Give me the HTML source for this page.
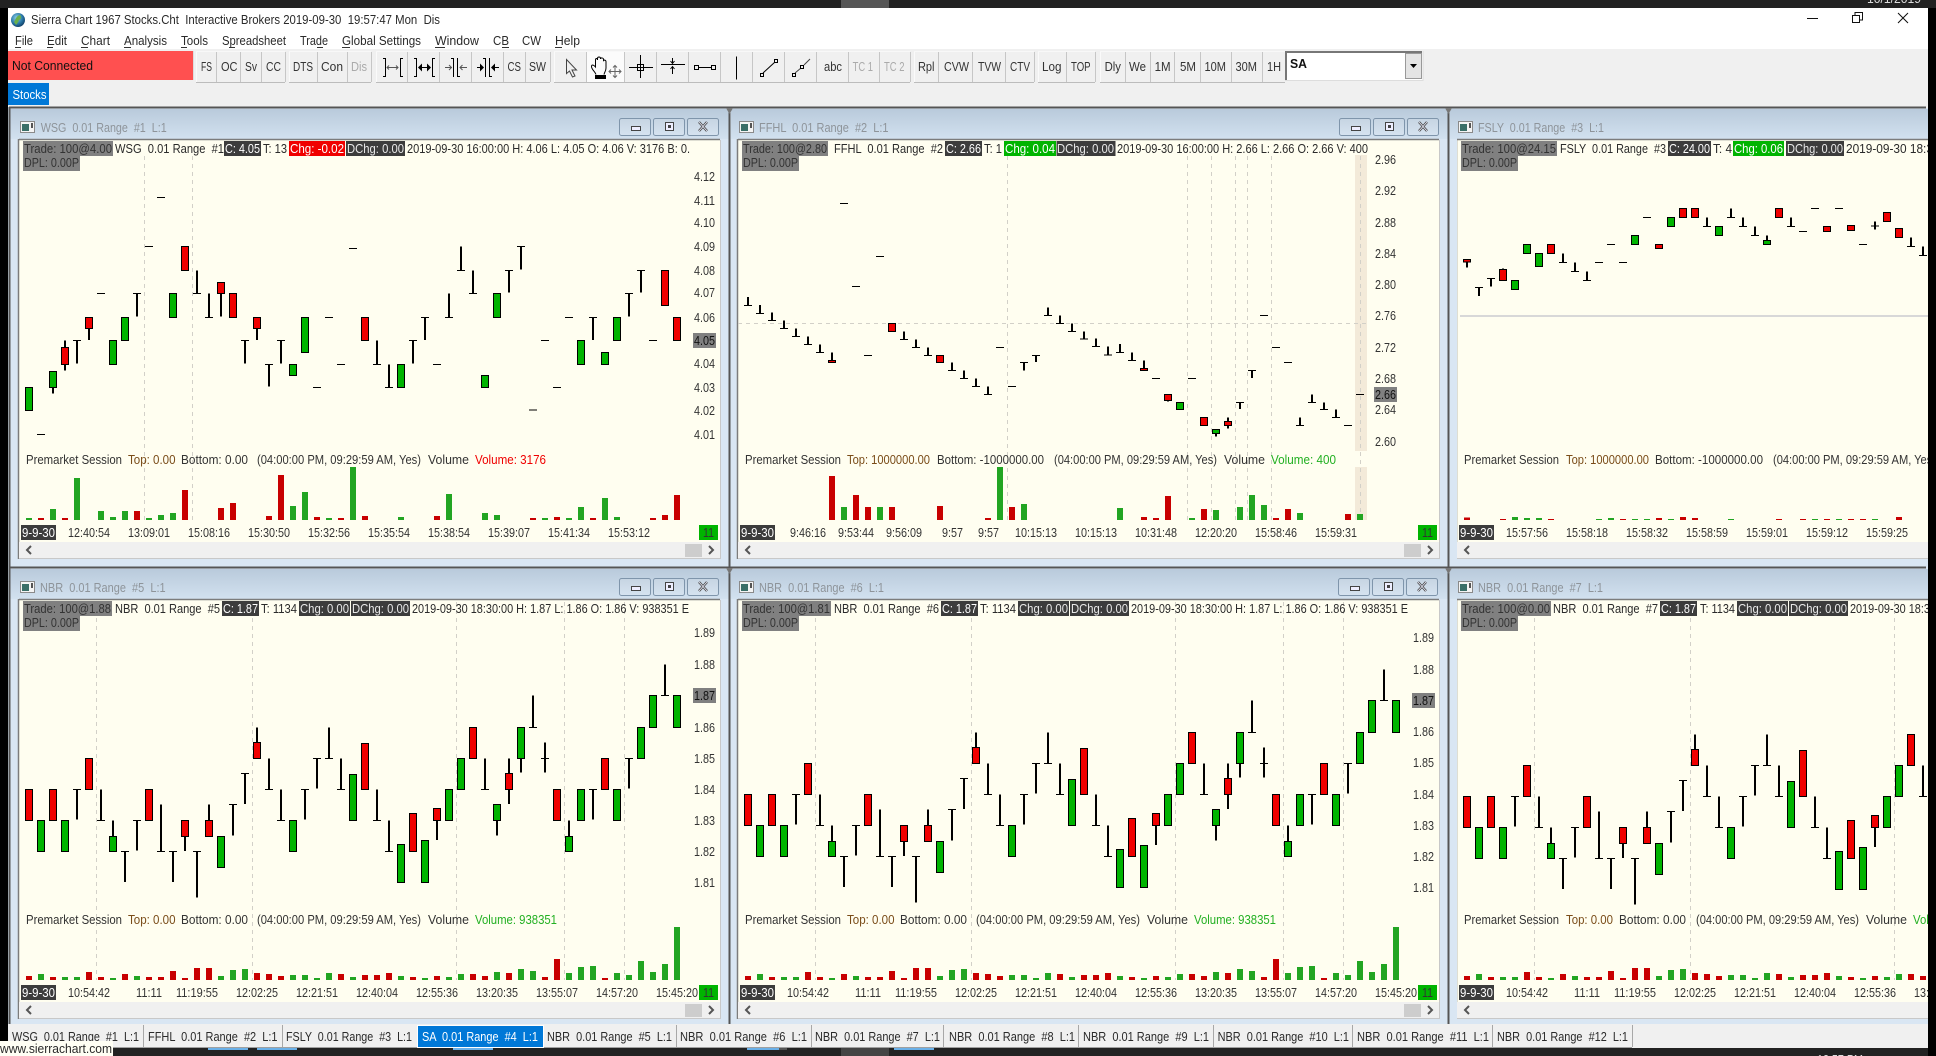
<!DOCTYPE html>
<html><head><meta charset="utf-8"><title>Sierra Chart</title>
<style>
html,body{margin:0;padding:0;background:#f0f0f0;overflow:hidden}
svg{position:absolute;left:0;top:0;display:block}
text{font-family:"Liberation Sans",sans-serif;font-size:12.5px;white-space:pre;fill:#333}
.k{fill:#111}.g{fill:#8e949a}.d{fill:#aaa}.w{fill:#fff}.l{fill:#e8e8e8}.b{fill:#7a4c18}.r{fill:#f00000}.v{fill:#22b022}.h{fill:#2a2a2a}
path{vector-effect:non-scaling-stroke}
.pw{stroke:#000;stroke-width:2;fill:none}
.pc{stroke:#000;stroke-width:1;fill:none}
.pr{fill:#f00000;stroke:#000;stroke-width:1}
.pg{fill:#00b400;stroke:#000;stroke-width:1}
.vr{stroke:#c80000;stroke-width:6;fill:none}
.vg{stroke:#22a522;stroke-width:6;fill:none}
.ds{stroke:#d2d0c8;stroke-width:1;stroke-dasharray:4 4;fill:none}
.ti{stroke:#000;stroke-width:1;fill:none}
.tf{stroke:none;fill:#000}
</style></head><body>
<svg width="1936" height="1056" viewBox="0 0 1936 1056" xmlns="http://www.w3.org/2000/svg">
<defs>
<linearGradient id="cap" x1="0" y1="0" x2="0" y2="1"><stop offset="0" stop-color="#b9cadb"/><stop offset="1" stop-color="#d2e1ef"/></linearGradient>
<linearGradient id="btn" x1="0" y1="0" x2="0" y2="1"><stop offset="0" stop-color="#c6d4e2"/><stop offset="1" stop-color="#d6e3f0"/></linearGradient>
<radialGradient id="earth" cx=".4" cy=".35" r=".7"><stop offset="0" stop-color="#8fd0e8"/><stop offset=".6" stop-color="#2a78a8"/><stop offset="1" stop-color="#103a60"/></radialGradient>
<clipPath id="c3"><rect x="1457" y="100" width="471" height="930"/></clipPath>
<g id="cbtn">
<rect x=".5" y=".5" width="31" height="17" rx="2" fill="url(#btn)" stroke="#7f95ab"/>
<rect x="34.5" y=".5" width="31" height="17" rx="2" fill="url(#btn)" stroke="#7f95ab"/>
<rect x="68.5" y=".5" width="31" height="17" rx="2" fill="url(#btn)" stroke="#7f95ab"/>
<rect x="12.5" y="8.5" width="9" height="4" fill="#eef" stroke="#444"/>
<rect x="46.5" y="4.5" width="8" height="8" fill="#eef" stroke="#444"/><rect x="49" y="7" width="3" height="3" fill="#444"/>
<path d="M80 4l8 9M88 4l-8 9" stroke="#444" stroke-width="2.4" fill="none"/><path d="M80 4l8 9M88 4l-8 9" stroke="#eef" stroke-width=".8" fill="none"/>
</g>
<g id="cic"><rect x=".5" y=".5" width="14" height="11" fill="#f4f4f4" stroke="#8a8a8a"/><rect x="2" y="3" width="7" height="7" fill="#3a6f68"/><rect x="11" y="2" width="2" height="5" fill="#555"/></g>
<g id="scr">
<rect x="19" y="542" width="701" height="16" fill="#f0f0f0"/>
<path d="M31 546l-4 4 4 4" stroke="#555" stroke-width="2" fill="none"/>
<path d="M709 546l4 4-4 4" stroke="#555" stroke-width="2" fill="none"/>
<rect x="685" y="544" width="17" height="13" fill="#cdcdcd"/>
</g>
<g id="cl"><rect x="19" y="140" width="701" height="419" fill="#fffef0"/><path d="M19 139.5H720M18.5 139V559" stroke="#7c7c7c" stroke-width="1.5" fill="none"/><path d="M19 558.5H720M720.5 140V559" stroke="#c8c8c8" fill="none"/></g>

<g id="c5">
<path class="pw" d="M48 658V749M72 658V751M84 751V799M96 845V936M108 751V842M132 703V845M144 845V936M156 799V843M168 845V983M180 703V751M204 703V797M216 610V702M228 472V518M240 565V658M252 658V751M276 658V749M288 565V656M300 472V565M312 565V658M348 658V751M360 751V845M408 751V810M456 565V658M468 751V797M480 565V702M492 565V608M504 376V472M516 517V608M540 751V799M564 658V749M600 565V656M636 283V376"/>
<path class="pc" d="M44 658h8M68 751h8M92 845h8M104 751h8M128 845h8M140 845h8M164 845h8M200 703h8M212 610h8M236 658h8M248 751h8M272 658h8M284 565h8M296 565h8M308 658h8M344 751h8M356 845h8M452 658h8M500 472h8M512 565h8M560 658h8M596 565h8M632 376h8"/>
<path class="pr" d="M-3.500 658h7v93h-7zM20.500 658h7v93h-7zM56.500 565h7v93h-7zM116.500 658h7v93h-7zM152.500 751h7v48h-7zM176.500 751h7v48h-7zM224.500 518h7v47h-7zM332.500 520h7v138h-7zM380.500 730h7v115h-7zM404.500 715h7v36h-7zM440.500 472h7v93h-7zM476.500 610h7v48h-7zM524.500 658h7v93h-7zM572.500 565h7v93h-7z"/>
<path class="pg" d="M8.500 751h7v94h-7zM32.500 751h7v94h-7zM80.500 799h7v46h-7zM188.500 799h7v93h-7zM260.500 751h7v94h-7zM320.500 613h7v138h-7zM368.500 823h7v115h-7zM392.500 811h7v127h-7zM416.500 658h7v93h-7zM428.500 565h7v93h-7zM464.500 703h7v48h-7zM488.500 472h7v93h-7zM536.500 799h7v46h-7zM548.500 658h7v93h-7zM584.500 658h7v93h-7zM608.500 472h7v93h-7zM620.500 376h7v96h-7zM644.500 376h7v96h-7z"/>
</g>
<g id="v5">
<path class="vr" d="M0 1218V1230M24 1221V1230M60 1206V1230M72 1221V1230M96 1212V1230M120 1221V1230M132 1221V1230M144 1203V1230M156 1224V1230M168 1194V1230M180 1194V1230M228 1209V1230M240 1212V1230M252 1218V1230M312 1212V1230M336 1215V1230M348 1215V1230M360 1209V1230M384 1221V1230M408 1218V1230M444 1212V1230M456 1218V1230M480 1209V1230M516 1221V1230M528 1167V1230M576 1224V1230"/>
<path class="vg" d="M12 1212V1230M36 1221V1230M48 1221V1230M84 1224V1230M108 1218V1230M192 1218V1230M204 1200V1230M216 1197V1230M264 1215V1230M276 1215V1230M288 1224V1230M300 1209V1230M324 1221V1230M372 1218V1230M396 1224V1230M420 1221V1230M432 1212V1230M468 1206V1230M492 1197V1230M504 1203V1230M540 1209V1230M552 1191V1230M564 1188V1230M588 1209V1230M600 1215V1230M612 1173V1230M624 1206V1230M636 1182V1230M648 1071V1230"/>
</g>
<path id="d5" class="ds" d="M96.500 602V980M252.500 602V980M456.500 602V980M564.500 602V980M624.500 602V980"/>
</defs>

<!-- base -->
<rect width="1936" height="1056" fill="#000"/>
<rect x="8" y="8" width="1920" height="41" fill="#fff"/>
<rect x="8" y="49" width="1920" height="59" fill="#f0f0f0"/>
<rect x="8" y="108" width="1920" height="916" fill="#d9e6f3"/>

<!-- top bar -->
<rect width="1936" height="8" fill="#222"/>
<rect x="841" width="48" height="8" fill="#565656"/>
<text x="1867" y="3" textLength="54" lengthAdjust="spacingAndGlyphs" style="fill:#ddd">10/1/2019</text>
<rect x="1928" y="8" width="8" height="1048" fill="#000"/>

<!-- title -->
<circle cx="18" cy="20" r="7" fill="url(#earth)"/><path d="M14 22c2-3 2-6 6-7 2 2 1 4-1 5-1 3-3 5-3 5z" fill="#6ab04a"/>
<text class="h" x="31" y="24" textLength="409" lengthAdjust="spacingAndGlyphs">Sierra Chart 1967 Stocks.Cht  Interactive Brokers 2019-09-30  19:57:47 Mon  Dis</text>
<path d="M1807 18.500h11" stroke="#111" fill="none"/>
<path d="M1852.500 15.500h7v7h-7zM1855 15v-2.500h7.500v7.500h-3" stroke="#111" fill="none"/>
<path d="M1898 13l10 10M1908 13l-10 10" stroke="#111" fill="none"/>

<!-- menu -->
<text class="h" x="15" y="45" textLength="18" lengthAdjust="spacingAndGlyphs">File</text>
<text class="h" x="47" y="45" textLength="20" lengthAdjust="spacingAndGlyphs">Edit</text>
<text class="h" x="81" y="45" textLength="29" lengthAdjust="spacingAndGlyphs">Chart</text>
<text class="h" x="124" y="45" textLength="43" lengthAdjust="spacingAndGlyphs">Analysis</text>
<text class="h" x="181" y="45" textLength="27" lengthAdjust="spacingAndGlyphs">Tools</text>
<text class="h" x="222" y="45" textLength="64" lengthAdjust="spacingAndGlyphs">Spreadsheet</text>
<text class="h" x="300" y="45" textLength="28" lengthAdjust="spacingAndGlyphs">Trade</text>
<text class="h" x="342" y="45" textLength="79" lengthAdjust="spacingAndGlyphs">Global Settings</text>
<text class="h" x="435" y="45" textLength="44" lengthAdjust="spacingAndGlyphs">Window</text>
<text class="h" x="493" y="45" textLength="16" lengthAdjust="spacingAndGlyphs">CB</text>
<text class="h" x="522" y="45" textLength="19" lengthAdjust="spacingAndGlyphs">CW</text>
<text class="h" x="555" y="45" textLength="25" lengthAdjust="spacingAndGlyphs">Help</text>
<path d="M15 47.500h6M47 47.500h6M81 47.500h7M124 47.500h7M181 47.500h6M229 47.500h6M317 47.500h6M342 47.500h8M435 47.500h10M502 47.500h7M555 47.500h7" stroke="#333" fill="none"/>

<!-- toolbar -->
<rect x="8" y="51" width="185" height="29" fill="#ff5050"/>
<rect x="193" y="51" width="1" height="29" fill="#ddd"/>
<text class="k" x="12" y="70" textLength="81" lengthAdjust="spacingAndGlyphs">Not Connected</text>
<rect x="586" y="51" width="38" height="32" fill="#fbfbfb"/>
<path d="M196 82.500h89M289 82.500h82M376 82.500h174M554 82.500h356M914 82.500h120M1038 82.500h57M1100 82.500h185" stroke="#bcbcbc" fill="none"/>
<path d="M196 51.500h89M289 51.500h82M376 51.500h174M554 51.500h356M914 51.500h120M1038 51.500h57M1100 51.500h185" stroke="#f8f8f8" fill="none"/>
<path d="M216.500 52v30M240.500 52v30M261.500 52v30M285.500 52v30M317.500 52v30M347.500 52v30M371.500 52v30M407.500 52v30M439.500 52v30M471.500 52v30M503.500 52v30M525.500 52v30M550.500 52v30M586.500 52v30M624.500 52v30M656.500 52v30M688.500 52v30M720.500 52v30M752.500 52v30M784.500 52v30M816.500 52v30M848.500 52v30M879.500 52v30M910.500 52v30M938.500 52v30M972.500 52v30M1005.500 52v30M1034.500 52v30M1066.500 52v30M1095.500 52v30M1125.500 52v30M1150.500 52v30M1174.500 52v30M1200.500 52v30M1231.500 52v30M1262.500 52v30" stroke="#c6c6c6" fill="none"/>
<path d="M196.500 52v30M289.500 52v30M376.500 52v30M554.500 52v30M914.500 52v30M1038.500 52v30M1100.500 52v30" stroke="#fafafa" fill="none"/>
<text x="201" y="71" textLength="11" lengthAdjust="spacingAndGlyphs">FS</text>
<text x="221" y="71" textLength="16.500" lengthAdjust="spacingAndGlyphs">OC</text>
<text x="245" y="71" textLength="12" lengthAdjust="spacingAndGlyphs">Sv</text>
<text x="266" y="71" textLength="15" lengthAdjust="spacingAndGlyphs">CC</text>
<text x="293" y="71" textLength="20" lengthAdjust="spacingAndGlyphs">DTS</text>
<text x="321" y="71" textLength="22" lengthAdjust="spacingAndGlyphs">Con</text>
<text class="d" x="351" y="71" textLength="16" lengthAdjust="spacingAndGlyphs">Dis</text>
<text x="507.500" y="71" textLength="13.500" lengthAdjust="spacingAndGlyphs">CS</text>
<text x="529" y="71" textLength="17" lengthAdjust="spacingAndGlyphs">SW</text>
<text x="824" y="71" textLength="18" lengthAdjust="spacingAndGlyphs">abc</text>
<text class="d" x="852.600" y="71" textLength="20.400" lengthAdjust="spacingAndGlyphs">TC 1</text>
<text class="d" x="884" y="71" textLength="20.500" lengthAdjust="spacingAndGlyphs">TC 2</text>
<text x="918" y="71" textLength="16.500" lengthAdjust="spacingAndGlyphs">Rpl</text>
<text x="944" y="71" textLength="25" lengthAdjust="spacingAndGlyphs">CVW</text>
<text x="978" y="71" textLength="23" lengthAdjust="spacingAndGlyphs">TVW</text>
<text x="1010" y="71" textLength="20" lengthAdjust="spacingAndGlyphs">CTV</text>
<text x="1042" y="71" textLength="19.500" lengthAdjust="spacingAndGlyphs">Log</text>
<text x="1071" y="71" textLength="19.600" lengthAdjust="spacingAndGlyphs">TOP</text>
<text x="1104.600" y="71" textLength="16.400" lengthAdjust="spacingAndGlyphs">Dly</text>
<text x="1129" y="71" textLength="17" lengthAdjust="spacingAndGlyphs">We</text>
<text x="1154.600" y="71" textLength="16" lengthAdjust="spacingAndGlyphs">1M</text>
<text x="1180" y="71" textLength="16" lengthAdjust="spacingAndGlyphs">5M</text>
<text x="1204.500" y="71" textLength="21.500" lengthAdjust="spacingAndGlyphs">10M</text>
<text x="1235.500" y="71" textLength="21.500" lengthAdjust="spacingAndGlyphs">30M</text>
<text x="1267" y="71" textLength="14" lengthAdjust="spacingAndGlyphs">1H</text>
<!-- toolbar icons -->
<path class="ti" d="M385.500 58v19M400.500 58v19M383 58.500h2M383 76.500h2M401 58.500h2M401 76.500h2"/>
<path class="ti" style="stroke:#555" d="M387 67.500h11M389 65.500l-2 2 2 2M396 65.500l2 2-2 2"/>
<path class="ti" d="M416.500 58v19M432.500 58v19M414 58.500h2M414 76.500h2M433 58.500h2M433 76.500h2M420 67.500h9"/>
<path class="tf" d="M418 67.500l4-4v8zM431 67.500l-4-4v8z"/>
<path class="ti" d="M453.500 58v19M457.500 58v19M451 58.500h2M458 76.500h2"/>
<path class="ti" style="stroke:#555" d="M445 67.500h7M449 65l2.500 2.500-2.500 2.500M460 67.500h7M462.500 65L460 67.500l2.500 2.500"/>
<path class="ti" d="M485.500 58v19M489.500 58v19M483 58.500h2M490 76.500h2M477 67.500h4M494 67.500h5"/>
<path class="tf" d="M484 67.500l-4-4v8zM491 67.500l4-4v8z"/>
<path class="ti" style="stroke:#444" d="M566.500 59.500V73.500l3-2.500 3 6 2.500-1-3-6h4.500z"/>
<path class="ti" d="M596 74.500c-1-3-4.500-5-4.500-8 0-2 2-2 4 .5V60c0-2 2-2 2 0V58.500c0-2 3-2 3 0v.5c0-1.500 3-1.500 3 .5v1c1-1 2.500 0 2.500 1v6.500c0 3-1.500 4-2 6.500"/>
<rect x="595" y="75" width="11" height="4" fill="#000"/>
<path class="ti" style="stroke:#666" d="M615 65.500v12M609 71.500h12M613 67.500l2-2 2 2M613 75.500l2 2 2-2M611 69.500l-2 2 2 2M619 69.500l2 2-2 2"/>
<path class="ti" d="M640.500 55v23M629 67.500h24"/><rect x="637.500" y="64.500" width="6" height="6" fill="none" stroke="#000"/>
<path class="ti" d="M661 64.500h24M672.500 58v5.500M670.500 61l2 2.500 2-2.500M672.500 74v-7.500M670.500 69l2-2.500 2 2.500"/>
<path class="ti" d="M698 67.500h14"/><rect x="694.500" y="65.500" width="4" height="4" fill="none" stroke="#000"/><rect x="711.500" y="65.500" width="4" height="4" fill="none" stroke="#000"/>
<path class="ti" d="M736.500 56.500v23"/>
<path class="ti" d="M763 73l12-11"/><rect x="760.500" y="73.500" width="3" height="3" fill="none" stroke="#000"/><rect x="774.500" y="59.500" width="3" height="3" fill="none" stroke="#000"/>
<path class="ti" style="stroke:#444" d="M795 73l6-5M804 65l6-6"/><rect x="792.500" y="73.500" width="3" height="3" fill="none" stroke="#000"/><rect x="800.500" y="65.500" width="3" height="3" fill="none" stroke="#000"/>
<!-- combo -->
<rect x="1285" y="51" width="138" height="30" fill="#fff"/>
<path d="M1286 80V52H1422" stroke="#777" stroke-width="2" fill="none"/>
<path d="M1285 80.500H1423M1423 51V81" stroke="#ddd" fill="none"/>
<rect x="1405.500" y="53.500" width="16" height="25" fill="#e4e4e4" stroke="#999"/>
<path d="M1410 64h7l-3.500 4z" fill="#000"/>
<text class="k" x="1290" y="68" textLength="17" lengthAdjust="spacingAndGlyphs" style="font-weight:bold">SA</text>
<!-- stocks -->
<rect x="8" y="83" width="41" height="22" fill="#0078d7"/>
<text class="w" x="12.500" y="99" textLength="34" lengthAdjust="spacingAndGlyphs">Stocks</text>

<!-- MDI frame -->
<rect x="10" y="109" width="719" height="30" fill="url(#cap)"/><rect x="731" y="109" width="717" height="30" fill="url(#cap)"/><rect x="1450" y="109" width="478" height="30" fill="url(#cap)"/>
<rect x="10" y="569" width="719" height="30" fill="url(#cap)"/><rect x="731" y="569" width="717" height="30" fill="url(#cap)"/><rect x="1450" y="569" width="478" height="30" fill="url(#cap)"/>
<path d="M9 107.500H1926M9 567.500H1926" stroke="#555" stroke-width="2" fill="none"/>
<path d="M9.500 107V1024M729.500 107V1024M1448.500 107V1024" stroke="#555" stroke-width="2" fill="none"/>
<path d="M726 108h7l-3.500 6zM1445 108h7l-3.500 6zM726 568h7l-3.500 6zM1445 568h7l-3.500 6z" fill="#777"/>
<use href="#cl"/><use href="#cl" x="719"/>
<use href="#cl" y="460"/><use href="#cl" x="719" y="460"/>
<g clip-path="url(#c3)"><use href="#cl" x="1438"/><use href="#cl" x="1438" y="460"/></g>
<use href="#cbtn" x="619" y="118"/><use href="#cbtn" x="1339" y="118"/><use href="#cbtn" x="619" y="578"/><use href="#cbtn" x="1338" y="578"/>
<use href="#cic" x="20" y="121"/><use href="#cic" x="739" y="121"/><use href="#cic" x="1458" y="121"/>
<use href="#cic" x="20" y="581"/><use href="#cic" x="739" y="581"/><use href="#cic" x="1458" y="581"/>
<text class="g" x="40.700" y="132" textLength="126" lengthAdjust="spacingAndGlyphs">WSG  0.01 Range  #1  L:1</text>
<text class="g" x="759" y="132" textLength="129.500" lengthAdjust="spacingAndGlyphs">FFHL  0.01 Range  #2  L:1</text>
<text class="g" x="1478" y="132" textLength="126" lengthAdjust="spacingAndGlyphs">FSLY  0.01 Range  #3  L:1</text>
<text class="g" x="40" y="592" textLength="125.600" lengthAdjust="spacingAndGlyphs">NBR  0.01 Range  #5  L:1</text>
<text class="g" x="759" y="592" textLength="125" lengthAdjust="spacingAndGlyphs">NBR  0.01 Range  #6  L:1</text>
<text class="g" x="1478" y="592" textLength="125" lengthAdjust="spacingAndGlyphs">NBR  0.01 Range  #7  L:1</text>

<!-- CHART 1 -->
<path class="ds" d="M144.500 156V520M192.500 156V520"/>
<g transform="translate(29 160) scale(1 .33333)" shape-rendering="crispEdges">
<path class="pw" d="M24 683V700M36 541V632M48 541V611M60 506V540M108 400V470M168 331V400M180 400V472M192 400V470M216 541V611M228 506V540M240 613V680M252 541V611M348 541V613M360 613V682M384 541V611M396 472V540M420 400V472M432 259V331M444 331V400M480 331V398M492 259V329M564 472V540M600 400V470M612 331V398"/>
<path class="pc" d="M8 823h8M44 541h8M68 400h8M104 400h8M116 259h8M128 112h8M164 400h8M176 472h8M212 541h8M236 613h8M248 541h8M284 682h8M296 472h8M308 613h8M320 265h8M344 613h8M356 682h8M380 541h8M392 472h8M404 613h8M416 472h8M428 331h8M440 400h8M476 331h8M488 259h8M500 750h8M512 541h8M524 682h8M536 472h8M560 472h8M596 400h8M608 331h8M620 541h8"/>
<path class="pr" d="M32.500 562h7v51h-7zM56.500 472h7v34h-7zM152.500 259h7v72h-7zM188.500 367h7v33h-7zM200.500 400h7v72h-7zM224.500 472h7v34h-7zM332.500 472h7v69h-7zM632.500 331h7v105h-7zM644.500 472h7v69h-7z"/>
<path class="pg" d="M-3.500 683h7v68h-7zM20.500 635h7v48h-7zM80.500 541h7v72h-7zM92.500 472h7v69h-7zM140.500 400h7v72h-7zM260.500 613h7v34h-7zM272.500 472h7v105h-7zM368.500 613h7v69h-7zM452.500 647h7v35h-7zM464.500 400h7v72h-7zM548.500 541h7v72h-7zM572.500 577h7v36h-7zM584.500 472h7v69h-7z"/>
<path class="vr" d="M12 1074V1080M36 1074V1080M108 1053V1080M156 990V1080M192 1044V1080M204 1029V1080M240 1068V1080M252 945V1080M288 1071V1080M312 1074V1080M336 1068V1080M408 1068V1080M504 1074V1080M528 1071V1080M564 1074V1080M624 1074V1080M636 1065V1080M648 1005V1080"/>
<path class="vg" d="M0 1074V1080M24 1047V1080M48 954V1080M72 1053V1080M84 1071V1080M96 1053V1080M120 1074V1080M132 1065V1080M144 1059V1080M264 1038V1080M276 996V1080M300 1074V1080M324 921V1080M372 1071V1080M420 1002V1080M456 1059V1080M468 1065V1080M516 1074V1080M540 1074V1080M552 1041V1080M576 1014V1080M588 1071V1080"/>
</g>
<rect x="23" y="141" width="90" height="15" fill="#808080"/><rect x="224" y="141" width="37" height="15" fill="#3c3c3c"/><rect x="289" y="141" width="56" height="15" fill="#f00000"/><rect x="346" y="141" width="59" height="15" fill="#3c3c3c"/><rect x="23" y="156" width="57" height="15" fill="#808080"/>
<text x="24" y="153" textLength="88" lengthAdjust="spacingAndGlyphs">Trade: 100@4.00</text>
<text class="h" x="115" y="153" textLength="109" lengthAdjust="spacingAndGlyphs">WSG  0.01 Range  #1</text>
<text class="w" x="225" y="153" textLength="35" lengthAdjust="spacingAndGlyphs">C: 4.05</text>
<text class="h" x="263" y="153" textLength="24" lengthAdjust="spacingAndGlyphs">T: 13</text>
<text class="w" x="290" y="153" textLength="54" lengthAdjust="spacingAndGlyphs">Chg: -0.02</text>
<text class="l" x="347" y="153" textLength="57" lengthAdjust="spacingAndGlyphs">DChg: 0.00</text>
<text class="h" x="407" y="153" textLength="283" lengthAdjust="spacingAndGlyphs">2019-09-30 16:00:00 H: 4.06 L: 4.05 O: 4.06 V: 3176 B: 0.</text>
<text x="24" y="167" textLength="55" lengthAdjust="spacingAndGlyphs">DPL: 0.00P</text>
<rect x="693" y="333" width="23" height="15" fill="#808080"/>
<text x="694" y="181" textLength="21" lengthAdjust="spacingAndGlyphs">4.12</text><text x="694" y="205" textLength="21" lengthAdjust="spacingAndGlyphs">4.11</text><text x="694" y="227" textLength="21" lengthAdjust="spacingAndGlyphs">4.10</text><text x="694" y="251" textLength="21" lengthAdjust="spacingAndGlyphs">4.09</text><text x="694" y="275" textLength="21" lengthAdjust="spacingAndGlyphs">4.08</text><text x="694" y="297" textLength="21" lengthAdjust="spacingAndGlyphs">4.07</text><text x="694" y="322" textLength="21" lengthAdjust="spacingAndGlyphs">4.06</text><text class="k" x="694" y="345" textLength="21" lengthAdjust="spacingAndGlyphs">4.05</text><text x="694" y="368" textLength="21" lengthAdjust="spacingAndGlyphs">4.04</text><text x="694" y="392" textLength="21" lengthAdjust="spacingAndGlyphs">4.03</text><text x="694" y="415" textLength="21" lengthAdjust="spacingAndGlyphs">4.02</text><text x="694" y="439" textLength="21" lengthAdjust="spacingAndGlyphs">4.01</text>
<text x="26" y="464" textLength="96" lengthAdjust="spacingAndGlyphs">Premarket Session</text><text class="b" x="128" y="464" textLength="47.500" lengthAdjust="spacingAndGlyphs">Top: 0.00</text><text x="181" y="464" textLength="67" lengthAdjust="spacingAndGlyphs">Bottom: 0.00</text><text x="257" y="464" textLength="164" lengthAdjust="spacingAndGlyphs">(04:00:00 PM, 09:29:59 AM, Yes)</text><text x="428" y="464" textLength="41" lengthAdjust="spacingAndGlyphs">Volume</text><text class="r" x="475" y="464" textLength="71" lengthAdjust="spacingAndGlyphs">Volume: 3176</text>
<rect x="21" y="525" width="35" height="15" fill="#3c3c3c"/><text class="w" x="22" y="537" textLength="33" lengthAdjust="spacingAndGlyphs">9-9-30</text>
<rect x="699" y="525" width="19" height="15" fill="#00b400"/><text x="703" y="537" textLength="11" lengthAdjust="spacingAndGlyphs">11</text>
<text x="68" y="537" textLength="42" lengthAdjust="spacingAndGlyphs">12:40:54</text><text x="128" y="537" textLength="42" lengthAdjust="spacingAndGlyphs">13:09:01</text><text x="188" y="537" textLength="42" lengthAdjust="spacingAndGlyphs">15:08:16</text><text x="248" y="537" textLength="42" lengthAdjust="spacingAndGlyphs">15:30:50</text><text x="308" y="537" textLength="42" lengthAdjust="spacingAndGlyphs">15:32:56</text><text x="368" y="537" textLength="42" lengthAdjust="spacingAndGlyphs">15:35:54</text><text x="428" y="537" textLength="42" lengthAdjust="spacingAndGlyphs">15:38:54</text><text x="488" y="537" textLength="42" lengthAdjust="spacingAndGlyphs">15:39:07</text><text x="548" y="537" textLength="42" lengthAdjust="spacingAndGlyphs">15:41:34</text><text x="608" y="537" textLength="42" lengthAdjust="spacingAndGlyphs">15:53:12</text>
<use href="#scr"/>

<!-- CHART 2 -->
<rect x="1355" y="155" width="12" height="296" fill="#f3ead9"/><rect x="1355" y="467" width="12" height="53" fill="#f3ead9"/>
<path class="ds" d="M1007.500 156V520M1187.500 156V520M1211.500 156V520M1235.500 156V520M1247.500 156V520M1271.500 156V520M1360.500 156V520M738 323.500H1367"/>
<g transform="translate(748 160) scale(1 .33333)" shape-rendering="crispEdges">
<path class="pw" d="M0 411V437M12 435V461M24 458V482M36 481V505M48 505V529M60 529V553M72 553V577M84 577V603M156 515V539M168 539V563M180 563V587M204 608V632M216 632V656M228 656V680M240 680V704M276 607V631M288 587V606M300 442V466M312 466V490M324 491V515M336 515V537M348 535V560M360 560V585M372 552V578M384 578V602M396 602V626M420 721V725M468 821V830M480 772V806M492 728V747M504 632V654M552 772V796M564 703V727M576 727V749M588 749V773"/>
<path class="pc" d="M-4 437h8M8 461h8M20 482h8M32 505h8M44 529h8M56 553h8M68 577h8M92 130h8M104 379h8M116 586h8M128 289h8M152 539h8M164 563h8M176 587h8M200 632h8M212 656h8M224 680h8M236 704h8M248 563h8M260 679h8M272 607h8M284 587h8M296 466h8M308 490h8M320 515h8M332 537h8M344 560h8M356 585h8M368 578h8M380 602h8M404 655h8M440 655h8M488 728h8M500 632h8M512 466h8M524 563h8M536 607h8M548 796h8M560 727h8M572 749h8M584 773h8M596 796h8M608 703h8"/>
<path class="pr" d="M80.500 601h7v7h-7zM140.500 490h7v25h-7zM188.500 587h7v21h-7zM392.500 625h7v6h-7zM416.500 704h7v17h-7zM452.500 773h7v23h-7zM476.500 785h7v11h-7z"/>
<path class="pg" d="M428.500 728h7v20h-7zM464.500 809h7v12h-7z"/>
<path class="vr" d="M84 948V1080M108 1005V1080M120 1041V1080M144 1041V1080M192 1038V1080M240 1074V1080M264 1041V1080M396 1071V1080M408 1074V1080M420 1008V1080M456 1047V1080M528 1074V1080M540 1047V1080M600 1062V1080"/>
<path class="vg" d="M96 1041V1080M132 1041V1080M252 921V1080M276 1032V1080M372 1044V1080M444 1074V1080M468 1050V1080M492 1041V1080M504 1005V1080M516 1035V1080M552 1059V1080M612 1062V1080"/>
</g>
<rect x="742" y="141" width="86" height="15" fill="#808080"/><rect x="945" y="141" width="37" height="15" fill="#3c3c3c"/><rect x="1004" y="141" width="52" height="15" fill="#00b400"/><rect x="1056.500" y="141" width="59" height="15" fill="#3c3c3c"/><rect x="742" y="156" width="57" height="15" fill="#808080"/>
<text x="743" y="153" textLength="84" lengthAdjust="spacingAndGlyphs">Trade: 100@2.80</text>
<text class="h" x="834" y="153" textLength="109" lengthAdjust="spacingAndGlyphs">FFHL  0.01 Range  #2</text>
<text class="w" x="946" y="153" textLength="35" lengthAdjust="spacingAndGlyphs">C: 2.66</text>
<text class="h" x="984" y="153" textLength="18" lengthAdjust="spacingAndGlyphs">T: 1</text>
<text class="w" x="1005" y="153" textLength="50" lengthAdjust="spacingAndGlyphs">Chg: 0.04</text>
<text class="l" x="1057" y="153" textLength="57" lengthAdjust="spacingAndGlyphs">DChg: 0.00</text>
<text class="h" x="1117" y="153" textLength="251" lengthAdjust="spacingAndGlyphs">2019-09-30 16:00:00 H: 2.66 L: 2.66 O: 2.66 V: 400</text>
<text x="743" y="167" textLength="55" lengthAdjust="spacingAndGlyphs">DPL: 0.00P</text>
<rect x="1374" y="387" width="23" height="15" fill="#808080"/>
<text x="1375" y="164" textLength="21" lengthAdjust="spacingAndGlyphs">2.96</text><text x="1375" y="195" textLength="21" lengthAdjust="spacingAndGlyphs">2.92</text><text x="1375" y="227" textLength="21" lengthAdjust="spacingAndGlyphs">2.88</text><text x="1375" y="258" textLength="21" lengthAdjust="spacingAndGlyphs">2.84</text><text x="1375" y="289" textLength="21" lengthAdjust="spacingAndGlyphs">2.80</text><text x="1375" y="320" textLength="21" lengthAdjust="spacingAndGlyphs">2.76</text><text x="1375" y="352" textLength="21" lengthAdjust="spacingAndGlyphs">2.72</text><text x="1375" y="383" textLength="21" lengthAdjust="spacingAndGlyphs">2.68</text><text class="k" x="1375" y="399" textLength="21" lengthAdjust="spacingAndGlyphs">2.66</text><text x="1375" y="414" textLength="21" lengthAdjust="spacingAndGlyphs">2.64</text><text x="1375" y="446" textLength="21" lengthAdjust="spacingAndGlyphs">2.60</text>
<text x="745" y="464" textLength="96" lengthAdjust="spacingAndGlyphs">Premarket Session</text><text class="b" x="847" y="464" textLength="83" lengthAdjust="spacingAndGlyphs">Top: 1000000.00</text><text x="937" y="464" textLength="107" lengthAdjust="spacingAndGlyphs">Bottom: -1000000.00</text><text x="1054" y="464" textLength="163" lengthAdjust="spacingAndGlyphs">(04:00:00 PM, 09:29:59 AM, Yes)</text><text x="1224" y="464" textLength="41" lengthAdjust="spacingAndGlyphs">Volume</text><text class="v" x="1271" y="464" textLength="65" lengthAdjust="spacingAndGlyphs">Volume: 400</text>
<rect x="740" y="525" width="35" height="15" fill="#3c3c3c"/><text class="w" x="741" y="537" textLength="33" lengthAdjust="spacingAndGlyphs">9-9-30</text>
<rect x="1418" y="525" width="19" height="15" fill="#00b400"/><text x="1422" y="537" textLength="11" lengthAdjust="spacingAndGlyphs">11</text>
<text x="790" y="537" textLength="36" lengthAdjust="spacingAndGlyphs">9:46:16</text><text x="838" y="537" textLength="36" lengthAdjust="spacingAndGlyphs">9:53:44</text><text x="886" y="537" textLength="36" lengthAdjust="spacingAndGlyphs">9:56:09</text><text x="942" y="537" textLength="21" lengthAdjust="spacingAndGlyphs">9:57</text><text x="978" y="537" textLength="21" lengthAdjust="spacingAndGlyphs">9:57</text><text x="1015" y="537" textLength="42" lengthAdjust="spacingAndGlyphs">10:15:13</text><text x="1075" y="537" textLength="42" lengthAdjust="spacingAndGlyphs">10:15:13</text><text x="1135" y="537" textLength="42" lengthAdjust="spacingAndGlyphs">10:31:48</text><text x="1195" y="537" textLength="42" lengthAdjust="spacingAndGlyphs">12:20:20</text><text x="1255" y="537" textLength="42" lengthAdjust="spacingAndGlyphs">15:58:46</text><text x="1315" y="537" textLength="42" lengthAdjust="spacingAndGlyphs">15:59:31</text>
<use href="#scr" x="719"/>

<!-- CHART 3 -->
<g clip-path="url(#c3)">
<rect x="1460" y="315" width="468" height="2" fill="#d8d8d8"/>
<g transform="translate(1467 160) scale(1 .33333)" shape-rendering="crispEdges">
<path class="pw" d="M0 306V323M12 382V408M24 355V380M36 325V330M96 280V307M108 307V334M120 334V361M240 172V199M264 145V172M276 172V199M288 199V226M300 226V242M324 172V199M408 184V208M444 232V259M456 259V286"/>
<path class="pc" d="M8 382h8M20 355h8M92 307h8M104 334h8M116 361h8M128 307h8M140 253h8M152 307h8M176 172h8M236 199h8M260 172h8M272 199h8M284 226h8M320 199h8M332 214h8M344 145h8M368 145h8M392 253h8M404 198h8M440 259h8M452 286h8"/>
<path class="pr" d="M-3.500 299h7v7h-7zM32.500 328h7v33h-7zM80.500 254h7v26h-7zM188.500 254h7v11h-7zM212.500 146h7v26h-7zM224.500 146h7v26h-7zM308.500 146h7v26h-7zM356.500 200h7v14h-7zM380.500 197h7v14h-7zM416.500 158h7v26h-7zM428.500 206h7v26h-7z"/>
<path class="pg" d="M44.500 362h7v26h-7zM56.500 254h7v26h-7zM68.500 281h7v38h-7zM164.500 227h7v26h-7zM200.500 173h7v26h-7zM248.500 200h7v26h-7zM296.500 242h7v11h-7z"/>
<path class="vr" d="M0 1072V1080M36 1077V1080M84 1077V1080M156 1077V1080M192 1074V1080M216 1071V1080M228 1074V1080M312 1077V1080M336 1077V1080M360 1077V1080M384 1077V1080M396 1077V1080M432 1071V1080"/>
<path class="vg" d="M48 1071V1080M60 1074V1080M72 1074V1080M132 1077V1080M144 1074V1080M168 1077V1080M180 1077V1080M204 1077V1080M264 1077V1080M348 1077V1080M372 1077V1080M408 1077V1080"/>
</g>
<rect x="1461" y="141" width="96" height="15" fill="#808080"/><rect x="1668" y="141" width="43" height="15" fill="#3c3c3c"/><rect x="1733" y="141" width="51" height="15" fill="#00b400"/><rect x="1786" y="141" width="58" height="15" fill="#3c3c3c"/><rect x="1461" y="156" width="57" height="15" fill="#808080"/>
<text x="1462" y="153" textLength="94" lengthAdjust="spacingAndGlyphs">Trade: 100@24.15</text>
<text class="h" x="1560" y="153" textLength="106" lengthAdjust="spacingAndGlyphs">FSLY  0.01 Range  #3</text>
<text class="w" x="1669" y="153" textLength="41" lengthAdjust="spacingAndGlyphs">C: 24.00</text>
<text class="h" x="1713" y="153" textLength="19" lengthAdjust="spacingAndGlyphs">T: 4</text>
<text class="w" x="1734" y="153" textLength="49" lengthAdjust="spacingAndGlyphs">Chg: 0.06</text>
<text class="l" x="1787" y="153" textLength="56" lengthAdjust="spacingAndGlyphs">DChg: 0.00</text>
<text class="h" x="1846" y="153" textLength="290" lengthAdjust="spacingAndGlyphs">2019-09-30 18:30:00 H: 24.00 L: 24.00 O: 24.00 V: 100</text>
<text x="1462" y="167" textLength="55" lengthAdjust="spacingAndGlyphs">DPL: 0.00P</text>
<text x="1464" y="464" textLength="95" lengthAdjust="spacingAndGlyphs">Premarket Session</text><text class="b" x="1566" y="464" textLength="83" lengthAdjust="spacingAndGlyphs">Top: 1000000.00</text><text x="1655" y="464" textLength="108" lengthAdjust="spacingAndGlyphs">Bottom: -1000000.00</text><text x="1773" y="464" textLength="163" lengthAdjust="spacingAndGlyphs">(04:00:00 PM, 09:29:59 AM, Yes)</text>
<rect x="1459" y="525" width="35" height="15" fill="#3c3c3c"/><text class="w" x="1460" y="537" textLength="33" lengthAdjust="spacingAndGlyphs">9-9-30</text>
<text x="1506" y="537" textLength="42" lengthAdjust="spacingAndGlyphs">15:57:56</text><text x="1566" y="537" textLength="42" lengthAdjust="spacingAndGlyphs">15:58:18</text><text x="1626" y="537" textLength="42" lengthAdjust="spacingAndGlyphs">15:58:32</text><text x="1686" y="537" textLength="42" lengthAdjust="spacingAndGlyphs">15:58:59</text><text x="1746" y="537" textLength="42" lengthAdjust="spacingAndGlyphs">15:59:01</text><text x="1806" y="537" textLength="42" lengthAdjust="spacingAndGlyphs">15:59:12</text><text x="1866" y="537" textLength="42" lengthAdjust="spacingAndGlyphs">15:59:25</text>
<rect x="1457" y="542" width="471" height="16" fill="#f0f0f0"/><path d="M1469 546l-4 4 4 4" stroke="#555" stroke-width="2" fill="none"/>
</g>

<!-- CHART 5 -->
<use href="#d5"/>
<g transform="translate(29 570) scale(1 .33333)" shape-rendering="crispEdges"><use href="#c5"/><use href="#v5"/></g>
<rect x="23" y="601" width="89" height="15" fill="#808080"/><rect x="222" y="601" width="37" height="15" fill="#3c3c3c"/><rect x="299" y="601" width="51" height="15" fill="#3c3c3c"/><rect x="351" y="601" width="59" height="15" fill="#3c3c3c"/><rect x="23" y="616" width="57" height="15" fill="#808080"/>
<text x="24" y="613" textLength="87" lengthAdjust="spacingAndGlyphs">Trade: 100@1.88</text>
<text class="h" x="115" y="613" textLength="105" lengthAdjust="spacingAndGlyphs">NBR  0.01 Range  #5</text>
<text class="w" x="223" y="613" textLength="35" lengthAdjust="spacingAndGlyphs">C: 1.87</text>
<text class="h" x="261" y="613" textLength="36" lengthAdjust="spacingAndGlyphs">T: 1134</text>
<text class="l" x="300" y="613" textLength="49" lengthAdjust="spacingAndGlyphs">Chg: 0.00</text>
<text class="l" x="352" y="613" textLength="57" lengthAdjust="spacingAndGlyphs">DChg: 0.00</text>
<text class="h" x="412" y="613" textLength="277" lengthAdjust="spacingAndGlyphs">2019-09-30 18:30:00 H: 1.87 L: 1.86 O: 1.86 V: 938351 E</text>
<text x="24" y="627" textLength="55" lengthAdjust="spacingAndGlyphs">DPL: 0.00P</text>
<rect x="693" y="688" width="23" height="15" fill="#808080"/>
<text x="694" y="637" textLength="21" lengthAdjust="spacingAndGlyphs">1.89</text><text x="694" y="669" textLength="21" lengthAdjust="spacingAndGlyphs">1.88</text><text class="k" x="694" y="700" textLength="21" lengthAdjust="spacingAndGlyphs">1.87</text><text x="694" y="732" textLength="21" lengthAdjust="spacingAndGlyphs">1.86</text><text x="694" y="763" textLength="21" lengthAdjust="spacingAndGlyphs">1.85</text><text x="694" y="794" textLength="21" lengthAdjust="spacingAndGlyphs">1.84</text><text x="694" y="825" textLength="21" lengthAdjust="spacingAndGlyphs">1.83</text><text x="694" y="856" textLength="21" lengthAdjust="spacingAndGlyphs">1.82</text><text x="694" y="887" textLength="21" lengthAdjust="spacingAndGlyphs">1.81</text>
<text x="26" y="924" textLength="96" lengthAdjust="spacingAndGlyphs">Premarket Session</text><text class="b" x="128" y="924" textLength="47.500" lengthAdjust="spacingAndGlyphs">Top: 0.00</text><text x="181" y="924" textLength="67" lengthAdjust="spacingAndGlyphs">Bottom: 0.00</text><text x="257" y="924" textLength="164" lengthAdjust="spacingAndGlyphs">(04:00:00 PM, 09:29:59 AM, Yes)</text><text x="428" y="924" textLength="41" lengthAdjust="spacingAndGlyphs">Volume</text><text class="v" x="475" y="924" textLength="82" lengthAdjust="spacingAndGlyphs">Volume: 938351</text>
<rect x="21" y="985" width="35" height="15" fill="#3c3c3c"/><text class="w" x="22" y="997" textLength="33" lengthAdjust="spacingAndGlyphs">9-9-30</text>
<rect x="699" y="985" width="19" height="15" fill="#00b400"/><text x="703" y="997" textLength="11" lengthAdjust="spacingAndGlyphs">11</text>
<text x="68" y="997" textLength="42" lengthAdjust="spacingAndGlyphs">10:54:42</text><text x="136" y="997" textLength="26" lengthAdjust="spacingAndGlyphs">11:11</text><text x="176" y="997" textLength="42" lengthAdjust="spacingAndGlyphs">11:19:55</text><text x="236" y="997" textLength="42" lengthAdjust="spacingAndGlyphs">12:02:25</text><text x="296" y="997" textLength="42" lengthAdjust="spacingAndGlyphs">12:21:51</text><text x="356" y="997" textLength="42" lengthAdjust="spacingAndGlyphs">12:40:04</text><text x="416" y="997" textLength="42" lengthAdjust="spacingAndGlyphs">12:55:36</text><text x="476" y="997" textLength="42" lengthAdjust="spacingAndGlyphs">13:20:35</text><text x="536" y="997" textLength="42" lengthAdjust="spacingAndGlyphs">13:55:07</text><text x="596" y="997" textLength="42" lengthAdjust="spacingAndGlyphs">14:57:20</text><text x="656" y="997" textLength="42" lengthAdjust="spacingAndGlyphs">15:45:20</text>
<use href="#scr" y="460"/>

<!-- CHART 6 -->
<use href="#d5" x="719"/>
<g transform="translate(748 575) scale(1 .33333)" shape-rendering="crispEdges"><use href="#c5"/></g>
<g transform="translate(748 570) scale(1 .33333)" shape-rendering="crispEdges"><use href="#v5"/></g>
<rect x="742" y="601" width="89" height="15" fill="#808080"/><rect x="941" y="601" width="37" height="15" fill="#3c3c3c"/><rect x="1018" y="601" width="51" height="15" fill="#3c3c3c"/><rect x="1070" y="601" width="59" height="15" fill="#3c3c3c"/><rect x="742" y="616" width="57" height="15" fill="#808080"/>
<text x="743" y="613" textLength="87" lengthAdjust="spacingAndGlyphs">Trade: 100@1.81</text>
<text class="h" x="834" y="613" textLength="105" lengthAdjust="spacingAndGlyphs">NBR  0.01 Range  #6</text>
<text class="w" x="942" y="613" textLength="35" lengthAdjust="spacingAndGlyphs">C: 1.87</text>
<text class="h" x="980" y="613" textLength="36" lengthAdjust="spacingAndGlyphs">T: 1134</text>
<text class="l" x="1019" y="613" textLength="49" lengthAdjust="spacingAndGlyphs">Chg: 0.00</text>
<text class="l" x="1071" y="613" textLength="57" lengthAdjust="spacingAndGlyphs">DChg: 0.00</text>
<text class="h" x="1131" y="613" textLength="277" lengthAdjust="spacingAndGlyphs">2019-09-30 18:30:00 H: 1.87 L: 1.86 O: 1.86 V: 938351 E</text>
<text x="743" y="627" textLength="55" lengthAdjust="spacingAndGlyphs">DPL: 0.00P</text>
<rect x="1412" y="693" width="23" height="15" fill="#808080"/>
<text x="1413" y="642" textLength="21" lengthAdjust="spacingAndGlyphs">1.89</text><text x="1413" y="674" textLength="21" lengthAdjust="spacingAndGlyphs">1.88</text><text class="k" x="1413" y="705" textLength="21" lengthAdjust="spacingAndGlyphs">1.87</text><text x="1413" y="736" textLength="21" lengthAdjust="spacingAndGlyphs">1.86</text><text x="1413" y="767" textLength="21" lengthAdjust="spacingAndGlyphs">1.85</text><text x="1413" y="799" textLength="21" lengthAdjust="spacingAndGlyphs">1.84</text><text x="1413" y="830" textLength="21" lengthAdjust="spacingAndGlyphs">1.83</text><text x="1413" y="861" textLength="21" lengthAdjust="spacingAndGlyphs">1.82</text><text x="1413" y="892" textLength="21" lengthAdjust="spacingAndGlyphs">1.81</text>
<text x="745" y="924" textLength="96" lengthAdjust="spacingAndGlyphs">Premarket Session</text><text class="b" x="847" y="924" textLength="47.500" lengthAdjust="spacingAndGlyphs">Top: 0.00</text><text x="900" y="924" textLength="67" lengthAdjust="spacingAndGlyphs">Bottom: 0.00</text><text x="976" y="924" textLength="164" lengthAdjust="spacingAndGlyphs">(04:00:00 PM, 09:29:59 AM, Yes)</text><text x="1147" y="924" textLength="41" lengthAdjust="spacingAndGlyphs">Volume</text><text class="v" x="1194" y="924" textLength="82" lengthAdjust="spacingAndGlyphs">Volume: 938351</text>
<rect x="740" y="985" width="35" height="15" fill="#3c3c3c"/><text class="w" x="741" y="997" textLength="33" lengthAdjust="spacingAndGlyphs">9-9-30</text>
<rect x="1418" y="985" width="19" height="15" fill="#00b400"/><text x="1422" y="997" textLength="11" lengthAdjust="spacingAndGlyphs">11</text>
<text x="787" y="997" textLength="42" lengthAdjust="spacingAndGlyphs">10:54:42</text><text x="855" y="997" textLength="26" lengthAdjust="spacingAndGlyphs">11:11</text><text x="895" y="997" textLength="42" lengthAdjust="spacingAndGlyphs">11:19:55</text><text x="955" y="997" textLength="42" lengthAdjust="spacingAndGlyphs">12:02:25</text><text x="1015" y="997" textLength="42" lengthAdjust="spacingAndGlyphs">12:21:51</text><text x="1075" y="997" textLength="42" lengthAdjust="spacingAndGlyphs">12:40:04</text><text x="1135" y="997" textLength="42" lengthAdjust="spacingAndGlyphs">12:55:36</text><text x="1195" y="997" textLength="42" lengthAdjust="spacingAndGlyphs">13:20:35</text><text x="1255" y="997" textLength="42" lengthAdjust="spacingAndGlyphs">13:55:07</text><text x="1315" y="997" textLength="42" lengthAdjust="spacingAndGlyphs">14:57:20</text><text x="1375" y="997" textLength="42" lengthAdjust="spacingAndGlyphs">15:45:20</text>
<use href="#scr" x="719" y="460"/>

<!-- CHART 7 -->
<g clip-path="url(#c3)">
<use href="#d5" x="1438"/>
<g transform="translate(1467 577) scale(1 .33333)" shape-rendering="crispEdges"><use href="#c5"/></g>
<g transform="translate(1467 570) scale(1 .33333)" shape-rendering="crispEdges"><use href="#v5"/></g>
<rect x="1461" y="601" width="90" height="15" fill="#808080"/><rect x="1660" y="601" width="37" height="15" fill="#3c3c3c"/><rect x="1737" y="601" width="51" height="15" fill="#3c3c3c"/><rect x="1789" y="601" width="59" height="15" fill="#3c3c3c"/><rect x="1461" y="616" width="57" height="15" fill="#808080"/>
<text x="1462" y="613" textLength="88" lengthAdjust="spacingAndGlyphs">Trade: 100@0.00</text>
<text class="h" x="1553" y="613" textLength="105" lengthAdjust="spacingAndGlyphs">NBR  0.01 Range  #7</text>
<text class="w" x="1661" y="613" textLength="35" lengthAdjust="spacingAndGlyphs">C: 1.87</text>
<text class="h" x="1700" y="613" textLength="35" lengthAdjust="spacingAndGlyphs">T: 1134</text>
<text class="l" x="1738" y="613" textLength="49" lengthAdjust="spacingAndGlyphs">Chg: 0.00</text>
<text class="l" x="1790" y="613" textLength="57" lengthAdjust="spacingAndGlyphs">DChg: 0.00</text>
<text class="h" x="1850" y="613" textLength="277" lengthAdjust="spacingAndGlyphs">2019-09-30 18:30:00 H: 1.87 L: 1.86 O: 1.86 V: 938351 E</text>
<text x="1462" y="627" textLength="55" lengthAdjust="spacingAndGlyphs">DPL: 0.00P</text>
<text x="1464" y="924" textLength="95" lengthAdjust="spacingAndGlyphs">Premarket Session</text><text class="b" x="1566" y="924" textLength="47" lengthAdjust="spacingAndGlyphs">Top: 0.00</text><text x="1619" y="924" textLength="67" lengthAdjust="spacingAndGlyphs">Bottom: 0.00</text><text x="1696" y="924" textLength="163" lengthAdjust="spacingAndGlyphs">(04:00:00 PM, 09:29:59 AM, Yes)</text><text x="1866" y="924" textLength="41" lengthAdjust="spacingAndGlyphs">Volume</text><text class="v" x="1913" y="924" textLength="82" lengthAdjust="spacingAndGlyphs">Volume: 938351</text>
<rect x="1459" y="985" width="35" height="15" fill="#3c3c3c"/><text class="w" x="1460" y="997" textLength="33" lengthAdjust="spacingAndGlyphs">9-9-30</text>
<text x="1506" y="997" textLength="42" lengthAdjust="spacingAndGlyphs">10:54:42</text><text x="1574" y="997" textLength="26" lengthAdjust="spacingAndGlyphs">11:11</text><text x="1614" y="997" textLength="42" lengthAdjust="spacingAndGlyphs">11:19:55</text><text x="1674" y="997" textLength="42" lengthAdjust="spacingAndGlyphs">12:02:25</text><text x="1734" y="997" textLength="42" lengthAdjust="spacingAndGlyphs">12:21:51</text><text x="1794" y="997" textLength="42" lengthAdjust="spacingAndGlyphs">12:40:04</text><text x="1854" y="997" textLength="42" lengthAdjust="spacingAndGlyphs">12:55:36</text><text x="1914" y="997" textLength="42" lengthAdjust="spacingAndGlyphs">13:20:35</text>
<rect x="1457" y="1002" width="471" height="16" fill="#f0f0f0"/><path d="M1469 1006l-4 4 4 4" stroke="#555" stroke-width="2" fill="none"/>
</g>

<!-- tabs -->
<rect x="8" y="1024" width="1920" height="24" fill="#f0f0f0"/>
<rect x="8" y="1047" width="1624" height="1" fill="#a0a0a0"/>
<path d="M143.500 1025V1047M282.500 1025V1047M811.500 1025V1047M676.500 1025V1047M943.500 1025V1047M1078.500 1025V1047M1213.500 1025V1047M1352.500 1025V1047M1492.500 1025V1047M1632.500 1025V1047" stroke="#a8a8a8" fill="none"/>
<rect x="417.500" y="1025.500" width="126" height="22" fill="#0078d7" stroke="#fff"/>
<text class="h" x="12" y="1041" textLength="127" lengthAdjust="spacingAndGlyphs">WSG  0.01 Range  #1  L:1</text>
<text class="h" x="148" y="1041" textLength="129.500" lengthAdjust="spacingAndGlyphs">FFHL  0.01 Range  #2  L:1</text>
<text class="h" x="286" y="1041" textLength="126" lengthAdjust="spacingAndGlyphs">FSLY  0.01 Range  #3  L:1</text>
<text class="w" x="422" y="1041" textLength="116" lengthAdjust="spacingAndGlyphs">SA  0.01 Range  #4  L:1</text>
<text class="h" x="547" y="1041" textLength="125" lengthAdjust="spacingAndGlyphs">NBR  0.01 Range  #5  L:1</text>
<text class="h" x="680" y="1041" textLength="127" lengthAdjust="spacingAndGlyphs">NBR  0.01 Range  #6  L:1</text>
<text class="h" x="815" y="1041" textLength="125" lengthAdjust="spacingAndGlyphs">NBR  0.01 Range  #7  L:1</text>
<text class="h" x="949" y="1041" textLength="126" lengthAdjust="spacingAndGlyphs">NBR  0.01 Range  #8  L:1</text>
<text class="h" x="1083" y="1041" textLength="126" lengthAdjust="spacingAndGlyphs">NBR  0.01 Range  #9  L:1</text>
<text class="h" x="1217.600" y="1041" textLength="131.400" lengthAdjust="spacingAndGlyphs">NBR  0.01 Range  #10  L:1</text>
<text class="h" x="1357" y="1041" textLength="132" lengthAdjust="spacingAndGlyphs">NBR  0.01 Range  #11  L:1</text>
<text class="h" x="1497" y="1041" textLength="131" lengthAdjust="spacingAndGlyphs">NBR  0.01 Range  #12  L:1</text>

<!-- bottom -->
<rect y="1048" width="1928" height="8" fill="#222"/>
<rect x="841" y="1048" width="48" height="8" fill="#444"/>
<path d="M208 1049h40M257 1049h40M453 1049h40M747 1049h32M894 1049h40" stroke="#6ab0e8" stroke-width="2" fill="none"/>
<rect x="779" y="1048" width="8" height="2" fill="#555"/>
<text x="1817" y="1064" textLength="46" lengthAdjust="spacingAndGlyphs" style="fill:#ddd">12:57 PM</text>
<rect y="1041" width="113" height="15" fill="#fffff4"/>
<text class="h" x="0" y="1053" textLength="112" lengthAdjust="spacingAndGlyphs">www.sierrachart.com</text>
<rect x="1928" y="8" width="8" height="1048" fill="#000"/>
</svg>
</body></html>
